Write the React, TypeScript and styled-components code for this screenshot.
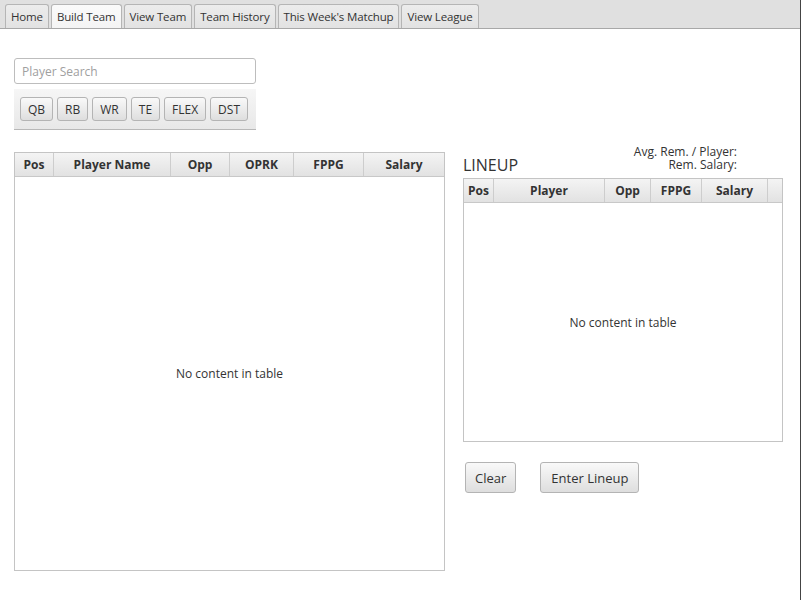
import React from "react";
import styled, { createGlobalStyle } from "styled-components";

const Global = createGlobalStyle`
  html, body { margin: 0; padding: 0; background: #fff; }
  body { font-family: "Open Sans", "Segoe UI", sans-serif; font-size: 12px; color: #333; }
  * { box-sizing: border-box; }
`;

const Window = styled.div`
  width: 801px;
  height: 600px;
  border-right: 1px solid #444;
  background: #fff;
  display: flex;
  flex-direction: column;
`;

const TabBar = styled.div`
  height: 29px;
  background: #e0e0e0;
  border-bottom: 1px solid #a8a8a8;
  display: flex;
  align-items: flex-end;
  padding-left: 5px;
  gap: 2px;
`;

const Tab = styled.div<{ $active?: boolean }>`
  height: 24px;
  padding: 0 5px;
  display: flex;
  align-items: center;
  border: 1px solid #b5b5b5;
  border-bottom: none;
  border-radius: 3px 3px 0 0;
  background: ${(p) => (p.$active ? "linear-gradient(#fafafa, #f4f4f4)" : "linear-gradient(#ececec, #e2e2e2)")};
  color: #333;
  font-size: 11.5px;
  letter-spacing: -0.15px;
  white-space: nowrap;
`;

const Content = styled.div`
  flex: 1;
  display: flex;
  padding: 29px 0 0 14px;
  gap: 18px;
`;

const LeftCol = styled.div`
  width: 431px;
  display: flex;
  flex-direction: column;
`;

const Search = styled.input`
  width: 242px;
  height: 26px;
  border: 1px solid #bdbdbd;
  border-radius: 3px;
  padding: 0 7px;
  font-family: inherit;
  font-size: 12px;
  color: #333;
  outline: none;
  &::placeholder { color: #a0a0a0; }
`;

const Toolbar = styled.div`
  width: 242px;
  height: 41px;
  margin-top: 5px;
  margin-bottom: 22px;
  background: linear-gradient(#f6f6f6, #e8e8e8);
  border-bottom: 1px solid #b8b8b8;
  display: flex;
  align-items: center;
  padding-left: 6px;
  gap: 4px;
`;

const Button = styled.button<{ $h?: number; $px?: number; $fs?: number }>`
  height: ${(p) => p.$h ?? 24}px;
  padding: 0 ${(p) => p.$px ?? 7}px;
  border: 1px solid #b4b4b4;
  border-radius: 3px;
  background: linear-gradient(#f9f9f9, #dedede);
  font-family: inherit;
  font-size: ${(p) => p.$fs ?? 12}px;
  color: #333;
  cursor: default;
`;

const TableBox = styled.div<{ $h: number }>`
  height: ${(p) => p.$h}px;
  border: 1px solid #c4c4c4;
  display: flex;
  flex-direction: column;
  background: #fff;
`;

const HeaderRow = styled.div<{ $cols: string }>`
  display: grid;
  grid-template-columns: ${(p) => p.$cols};
  height: 24px;
  background: linear-gradient(#f4f4f4, #e2e2e2);
  border-bottom: 1px solid #c8c8c8;
`;

const HeaderCell = styled.div`
  display: flex;
  align-items: center;
  justify-content: center;
  font-weight: bold;
  font-size: 12px;
  color: #333;
  border-right: 1px solid #cdcdcd;
  &:last-child { border-right: none; }
`;

const Empty = styled.div`
  flex: 1;
  display: flex;
  align-items: center;
  justify-content: center;
  font-size: 12px;
  color: #333;
`;

const RightCol = styled.div`
  width: 320px;
  display: flex;
  flex-direction: column;
  padding-top: 86px;
`;

const LineupHead = styled.div`
  height: 34px;
  display: flex;
  align-items: flex-end;
  justify-content: space-between;
`;

const LineupTitle = styled.div`
  font-size: 16px;
  color: #333;
  line-height: 20px;
  padding-bottom: 3px;
`;

const RemInfo = styled.div`
  display: flex;
  flex-direction: column;
  align-items: flex-end;
  margin-right: 46px;
  margin-top: 1px;
  align-self: flex-start;
`;

const RemLine = styled.div`
  font-size: 12px;
  line-height: 13px;
  height: 13px;
  color: #333;
  white-space: nowrap;
`;

const ActionRow = styled.div`
  display: flex;
  gap: 24px;
  margin-top: 20px;
  padding-left: 2px;
`;

type Col = { label: string; w: number };

function DataTable({ cols, height }: { cols: Col[]; height: number }) {
  return (
    <TableBox $h={height}>
      <HeaderRow $cols={cols.map((c) => c.w + "px").join(" ")}>
        {cols.map((c, i) => (
          <HeaderCell key={i}>{c.label}</HeaderCell>
        ))}
      </HeaderRow>
      <Empty>No content in table</Empty>
    </TableBox>
  );
}

const leftCols: Col[] = [
  { label: "Pos", w: 39 },
  { label: "Player Name", w: 117 },
  { label: "Opp", w: 59 },
  { label: "OPRK", w: 64 },
  { label: "FPPG", w: 70 },
  { label: "Salary", w: 80 },
];

const rightCols: Col[] = [
  { label: "Pos", w: 30 },
  { label: "Player", w: 111 },
  { label: "Opp", w: 46 },
  { label: "FPPG", w: 51 },
  { label: "Salary", w: 66 },
  { label: "", w: 14 },
];

export default function App() {
  const tabs = ["Home", "Build Team", "View Team", "Team History", "This Week's Matchup", "View League"];
  return (
    <>
      <Global />
      <Window>
        <TabBar>
          {tabs.map((t) => (
            <Tab key={t} $active={t === "Build Team"}>{t}</Tab>
          ))}
        </TabBar>
        <Content>
          <LeftCol>
            <Search placeholder="Player Search" />
            <Toolbar>
              {["QB", "RB", "WR", "TE", "FLEX", "DST"].map((b) => (
                <Button key={b}>{b}</Button>
              ))}
            </Toolbar>
            <DataTable cols={leftCols} height={419} />
          </LeftCol>
          <RightCol>
            <LineupHead>
              <LineupTitle>LINEUP</LineupTitle>
              <RemInfo>
                <RemLine>Avg. Rem. / Player:</RemLine>
                <RemLine>Rem. Salary:</RemLine>
              </RemInfo>
            </LineupHead>
            <DataTable cols={rightCols} height={264} />
            <ActionRow>
              <Button $h={31} $px={9} $fs={13}>Clear</Button>
              <Button $h={31} $px={10} $fs={13}>Enter Lineup</Button>
            </ActionRow>
          </RightCol>
        </Content>
      </Window>
    </>
  );
}
